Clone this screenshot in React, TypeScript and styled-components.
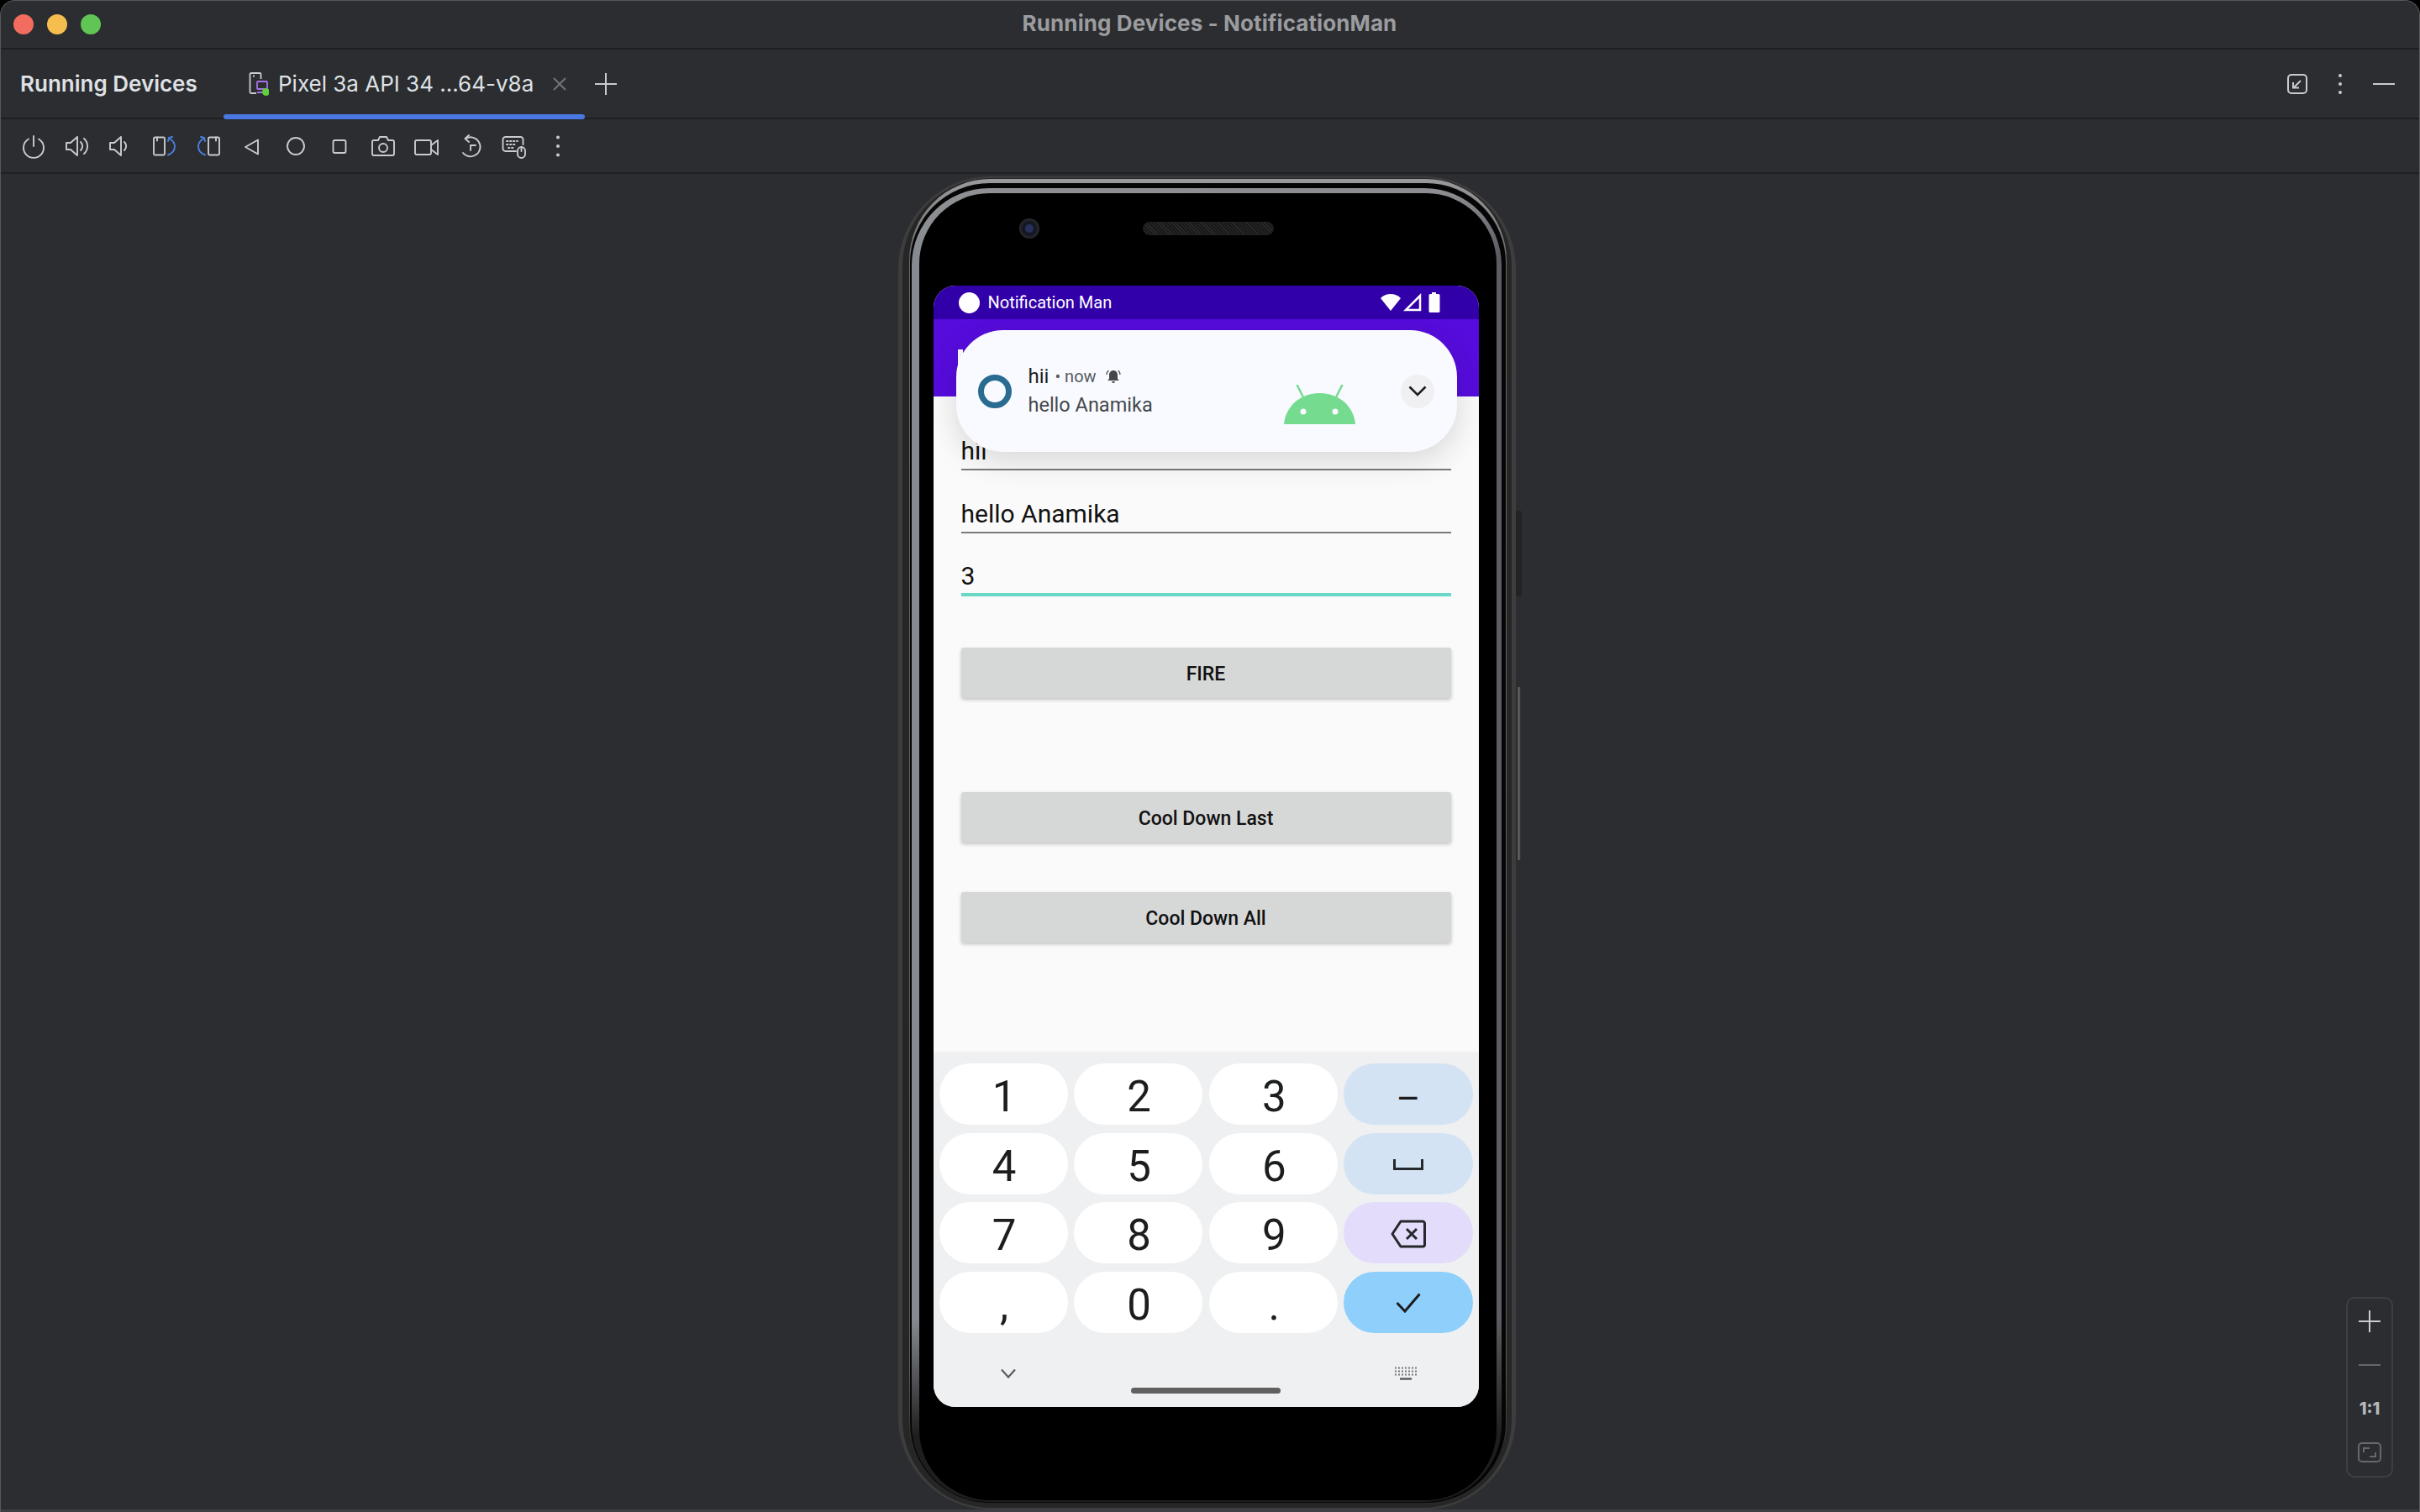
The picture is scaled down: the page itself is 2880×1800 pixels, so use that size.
import React from "react";
import styled, { createGlobalStyle } from "styled-components";

const GlobalStyle = createGlobalStyle`
	html, body {
		margin: 0;
		padding: 0;
		background: #000000;
	}
	* {
		box-sizing: border-box;
	}
`;

const Window = styled.div`
	width: 2880px;
	height: 1800px;
	display: flex;
	flex-direction: column;
	background: #2b2d30;
	border: 1px solid #55575b;
	border-bottom: none;
	border-radius: 18px 18px 0 0;
	overflow: hidden;
	font-family: "Inter", "Liberation Sans", sans-serif;
	color: #dfe1e5;
`;

const TitleBar = styled.div`
	height: 58px;
	flex: none;
	display: grid;
	grid-template-columns: 1fr auto 1fr;
	align-items: center;
	padding: 0 16px 0 15px;
	border-bottom: 2px solid #1e1f22;
`;

const Lights = styled.div`
	display: flex;
	gap: 16px;
`;

const Light = styled.span<{ $color: string }>`
	width: 24px;
	height: 24px;
	border-radius: 50%;
	background: ${({ $color }) => $color};
`;

const WindowTitle = styled.div`
	margin-top: -4px;
	font-size: 26px;
	font-weight: 700;
	letter-spacing: 0.1px;
	color: #9b9c9f;
	white-space: nowrap;
`;

const TabRow = styled.div`
	height: 83px;
	flex: none;
	display: flex;
	align-items: center;
	padding: 0 29px 0 23px;
	border-bottom: 2px solid #1e1f22;
`;

const PanelName = styled.div`
	width: 242px;
	font-size: 26px;
	font-weight: 600;
	color: #dfe1e5;
	white-space: nowrap;
`;

const Tab = styled.div`
	position: relative;
	width: 430px;
	height: 100%;
	display: flex;
	align-items: center;
	padding-left: 30px;
`;

const TabText = styled.span`
	width: 327px;
	margin-left: 11px;
	font-size: 26px;
	color: #dfe1e5;
	white-space: nowrap;
`;

const TabUnderline = styled.div`
	position: absolute;
	left: 0;
	right: 0;
	bottom: -2px;
	height: 6px;
	border-radius: 3px;
	background: #4a78e3;
`;

const TabActions = styled.div`
	margin-left: auto;
	display: flex;
	align-items: center;
	gap: 37px;
`;

const Toolbar = styled.div`
	height: 65px;
	flex: none;
	display: flex;
	align-items: center;
	padding-left: 13px;
	border-bottom: 2px solid #1e1f22;
`;

const ToolSlot = styled.div`
	width: 52px;
	height: 32px;
	display: flex;
	justify-content: center;
`;

const Canvas = styled.main`
	position: relative;
	flex: 1;
	min-height: 0;
	display: flex;
	justify-content: center;
	padding: 3px 8px 0 0;
`;

const BottomStrip = styled.div`
	height: 3px;
	flex: none;
	background: #3e4044;
`;

const ZoomPanel = styled.div`
	position: absolute;
	right: 31px;
	bottom: 38px;
	width: 56px;
	height: 215px;
	padding-top: 1px;
	display: flex;
	flex-direction: column;
	border: 2px solid #3d3f42;
	border-radius: 10px;
`;

const ZoomItem = styled.div`
	height: 52px;
	flex: none;
	display: flex;
	align-items: center;
	justify-content: center;
	font-size: 20px;
	font-weight: 800;
	color: #b6b8ba;
`;

/* device frame, one nested rim per visible band of the skin */
const PhoneShell = styled.div`
	position: relative;
	width: 735px;
	height: 1587px;
	flex: none;
	padding: 2px 5px 2px 5px;
	border-radius: 110px;
	background: #3d3d3e;
`;

const SideKey = styled.div<{ $top: number; $height: number; $shine?: boolean }>`
	position: absolute;
	right: -7px;
	top: ${({ $top }) => $top}px;
	width: 7px;
	height: ${({ $height }) => $height}px;
	border-radius: 0 3px 3px 0;
	background: ${({ $shine }) =>
		$shine ? "linear-gradient(to right, #2a2a2a 20%, #6a6a6a 50%, #2a2a2a 85%)" : "#232323"};
`;

const RimDark = styled.div`
	height: 100%;
	padding: 1px 6px 5px 8px;
	border-radius: 105px;
	background: #262626;
`;

const RimLine = styled.div`
	height: 100%;
	padding: 5px 1px 1px 1px;
	border-radius: 97px;
	background: linear-gradient(to bottom, #9a9a9c 0, #6a6a6c 6%, #5c5c5e 90%, #262626 97%);
`;

const RimGap = styled.div`
	height: 100%;
	padding: 6px 5px 1px 2px;
	border-radius: 95px;
	background: #050505;
`;

const RimBezel = styled.div`
	height: 100%;
	padding: 6px 6px 2px 9px;
	border-radius: 92px;
	background:
		linear-gradient(to bottom, #8f9094 0, transparent 5%, transparent 86%, #1e1e1e 95%),
		linear-gradient(to right, #878b91 45%, #5c5c62 55%);
`;

const Glass = styled.div`
	height: 100%;
	padding: 0 21px 0 17px;
	border-radius: 84px;
	background: #000000;
`;

const BezelTop = styled.div`
	height: 110px;
	padding: 0 0 26px 102px;
	display: flex;
	align-items: center;
	gap: 123px;
`;

const Camera = styled.div`
	width: 24px;
	height: 24px;
	border-radius: 50%;
	background: radial-gradient(circle, #27325c 0 22%, #10131f 38%, #2b2b2d 70%, #1c1c1d 100%);
`;

const Speaker = styled.div`
	width: 156px;
	height: 16px;
	border-radius: 8px;
	border: 1px solid #202020;
	background: repeating-linear-gradient(45deg, #2b2b2b 0 1px, #191919 1px 3px);
`;

const Screen = styled.div`
	position: relative;
	width: 649px;
	height: 1335px;
	display: flex;
	flex-direction: column;
	border-radius: 26px;
	overflow: hidden;
	background: #fafafa;
	font-family: "Roboto", "Liberation Sans", sans-serif;
`;

const StatusBar = styled.div`
	height: 40px;
	flex: none;
	display: flex;
	align-items: center;
	padding: 0 0 0 30px;
	background: #3200a9;
	color: #ffffff;
	font-size: 20px;
`;

const StatusDot = styled.span`
	width: 25px;
	height: 25px;
	margin-right: 10px;
	border-radius: 50%;
	background: #ffffff;
`;

const StatusIcons = styled.div`
	margin-left: auto;
	margin-right: 45px;
	display: flex;
	align-items: center;
	gap: 2px;
`;

const AppBar = styled.div`
	height: 92px;
	flex: none;
	display: flex;
	align-items: center;
	padding-left: 29px;
	background: #560cdc;
`;

/* the only part of the app title that shows past the heads-up card */
const TitleSliver = styled.span`
	width: 6px;
	height: 20px;
	background: #ffffff;
`;

const Notification = styled.div`
	position: absolute;
	top: 53px;
	left: 27px;
	width: 596px;
	height: 145px;
	display: flex;
	align-items: center;
	padding: 0 27px 0 26px;
	border-radius: 56px;
	background: #f8faff;
	box-shadow: 0 10px 36px rgba(0, 0, 0, 0.14);
`;

const NoticeRing = styled.div`
	width: 40px;
	height: 40px;
	flex: none;
	margin-right: 20px;
	border: 7px solid #2a6b92;
	border-radius: 50%;
`;

const NoticeText = styled.div`
	flex: 1;
	display: flex;
	flex-direction: column;
	gap: 5px;
`;

const NoticeHead = styled.div`
	height: 30px;
	display: flex;
	align-items: center;
	font-size: 24px;
	color: #1d1d20;
`;

const NoticeMeta = styled.span`
	margin: 0 11px 0 7px;
	font-size: 20px;
	color: #57595c;
`;

const NoticeBody = styled.div`
	height: 30px;
	line-height: 29px;
	font-size: 23.5px;
	color: #45474a;
`;

const AndroidMark = styled.svg`
	width: 85px;
	height: 47px;
	flex: none;
	margin: 32px 54px 0 0;
`;

const ExpandButton = styled.div`
	width: 40px;
	height: 40px;
	flex: none;
	display: flex;
	align-items: center;
	justify-content: center;
	border-radius: 50%;
	background: #f0f0f2;
`;

const Content = styled.div`
	flex: 1;
	min-height: 0;
	padding: 13px 33px 0;
	display: flex;
	flex-direction: column;
`;

const Field = styled.div<{ $active?: boolean }>`
	height: 75px;
	flex: none;
	display: flex;
	align-items: flex-end;
	padding-bottom: ${({ $active }) => ($active ? "2px" : "3px")};
	border-bottom: ${({ $active }) => ($active ? "4px solid #69d8c6" : "2px solid #7a7a7a")};
	font-size: 30px;
	line-height: 37px;
	color: #111111;
`;

const ActionButton = styled.div<{ $top: number }>`
	height: 60px;
	flex: none;
	margin-top: ${({ $top }) => $top}px;
	padding-top: 2px;
	display: flex;
	align-items: center;
	justify-content: center;
	border-radius: 3px;
	background: #d6d7d7;
	box-shadow: 0 2px 4px rgba(0, 0, 0, 0.22);
	font-size: 23px;
	font-weight: 500;
	color: #111111;
`;

const Keyboard = styled.div`
	height: 423px;
	flex: none;
	padding: 14px 7px 0;
	display: flex;
	flex-direction: column;
	background: #eff0f2;
`;

const KeyGrid = styled.div`
	display: grid;
	grid-template-columns: repeat(4, 1fr);
	grid-auto-rows: 73px;
	gap: 9.5px 7.5px;
`;

const Key = styled.div<{ $bg?: string; $size?: number; $drop?: number }>`
	display: flex;
	align-items: center;
	justify-content: center;
	padding-top: ${({ $drop }) => $drop ?? 6}px;
	padding-left: ${({ $drop }) => ($drop === undefined ? "2px" : "0")};
	border-radius: 37px;
	background: ${({ $bg }) => $bg || "#ffffff"};
	font-size: ${({ $size }) => $size ?? 51}px;
	line-height: 1;
	color: #1c1d1f;
`;

const ImeRow = styled.div`
	height: 28px;
	flex: none;
	margin-top: 34px;
	padding: 0 67px 0 73px;
	display: flex;
	align-items: center;
	justify-content: space-between;
`;

const HomePill = styled.div`
	width: 178px;
	height: 7px;
	flex: none;
	margin: 3px auto 0;
	border-radius: 4px;
	background: #606060;
`;

const Tool = ({ children }: { children: React.ReactNode }) => (
	<ToolSlot>
		<svg width="32" height="32" viewBox="0 0 32 32" fill="none" stroke="#c9cbce" strokeWidth="1.9" strokeLinejoin="round" strokeLinecap="round">
			{children}
		</svg>
	</ToolSlot>
);

const RotateGlyph = () => (
	<>
		<rect x="3" y="5.5" width="13" height="21" rx="1.5" />
		<path d="M7 5.5v4" />
		<path d="M21 6.5c4.500 2.500 7 6 7 10s-3 8-8 10" stroke="#4a7fe0" />
		<path d="M20 10l1-4 4-1" stroke="#4a7fe0" />
	</>
);

const toolbarIcons = [
	<>
		<path d="M10 7.5a12 12 0 1 0 12 0" />
		<path d="M16 4v12" />
	</>,
	<>
		<path d="M3 12h5l8-7v22l-8-7H3z" />
		<path d="M20 11a7 7 0 0 1 0 10" />
		<path d="M24 7a12 12 0 0 1 0 18" />
	</>,
	<>
		<path d="M3 12h5l8-7v22l-8-7H3z" />
		<path d="M20 11a7 7 0 0 1 0 10" />
	</>,
	<RotateGlyph />,
	<g transform="matrix(-1 0 0 1 32 0)">
		<RotateGlyph />
	</g>,
	<path d="M8 17l15-8.500v17z" />,
	<circle cx="16" cy="16" r="10" />,
	<rect x="8.500" y="9" width="15" height="15" rx="2" />,
	<>
		<path d="M5 9h5l2-4h8l2 4h5a2 2 0 0 1 2 2v14a2 2 0 0 1-2 2H5a2 2 0 0 1-2-2V11a2 2 0 0 1 2-2z" />
		<circle cx="16" cy="18" r="5" />
	</>,
	<>
		<rect x="2" y="9" width="19" height="17" rx="2" />
		<path d="M21 15l8-6v17l-8-6" />
	</>,
	<>
		<path d="M10 7a11.500 11.500 0 1 1-3 17" />
		<path d="M14 3l-4.500 4 4.500 4" />
		<path d="M16 21v-6h6" />
	</>,
	<>
		<path d="M18 22H5.500a3 3 0 0 1-3-3V8a3 3 0 0 1 3-3h18a3 3 0 0 1 3 3v6" />
		<path d="M7 10h13M7 14h11M9 18h7" strokeDasharray="1.500 2.500" />
		<rect x="20" y="17" width="9" height="13" rx="4.500" />
		<path d="M24.500 17v5" />
	</>,
	<>
		<circle cx="16" cy="5.500" r="2" fill="#c9cbce" stroke="none" />
		<circle cx="16" cy="16" r="2" fill="#c9cbce" stroke="none" />
		<circle cx="16" cy="26.500" r="2" fill="#c9cbce" stroke="none" />
	</>,
];

const DeviceTabIcon = () => (
	<svg width="24" height="30" viewBox="0 0 24 30" fill="none" strokeWidth="1.8">
		<path d="M9 26H3a1.500 1.500 0 0 1-1.500-1.500v-21A1.500 1.500 0 0 1 3 2h10a1.500 1.500 0 0 1 1.500 1.500V9" stroke="#c9cbce" />
		<path d="M5 5.500h2" stroke="#c9cbce" />
		<rect x="10" y="12" width="12" height="9" rx="1" stroke="#a874e8" />
		<path d="M10 25h8" stroke="#a874e8" />
		<circle cx="20.500" cy="24.500" r="4.500" fill="#5fd13c" />
	</svg>
);

const App = () => {
	const digits = ["1", "2", "3", "4", "5", "6", "7", "8", "9"];

	return (
		<>
			<GlobalStyle />
			<Window>
				<TitleBar>
					<Lights>
						<Light $color="#f26d5f" />
						<Light $color="#f6bd4f" />
						<Light $color="#60c554" />
					</Lights>
					<WindowTitle>Running Devices - NotificationMan</WindowTitle>
				</TitleBar>

				<TabRow>
					<PanelName>Running Devices</PanelName>
					<Tab>
						<DeviceTabIcon />
						<TabText>Pixel 3a API 34 ...64-v8a</TabText>
						<svg width="16" height="16" viewBox="0 0 16 16" stroke="#75777b" strokeWidth="1.8">
							<path d="M1 1l14 14M15 1L1 15" />
						</svg>
						<TabUnderline />
					</Tab>
					<svg width="26" height="26" viewBox="0 0 26 26" stroke="#c9cbce" strokeWidth="2" style={{ marginLeft: 12 }}>
						<path d="M13 0v26M0 13h26" />
					</svg>
					<TabActions>
						<svg width="24" height="24" viewBox="0 0 24 24" fill="none" stroke="#c9cbce" strokeWidth="2">
							<rect x="1" y="1" width="22" height="22" rx="4" />
							<path d="M16 8l-8 8M7 10v6.500h7" />
						</svg>
						<svg width="4" height="24" viewBox="0 0 4 24" fill="#c9cbce">
							<circle cx="2" cy="2" r="2" />
							<circle cx="2" cy="12" r="2" />
							<circle cx="2" cy="22" r="2" />
						</svg>
						<svg width="26" height="2" viewBox="0 0 26 2" fill="#c9cbce">
							<rect width="26" height="2" />
						</svg>
					</TabActions>
				</TabRow>

				<Toolbar>
					{toolbarIcons.map((icon, index) => (
						<Tool key={index}>{icon}</Tool>
					))}
				</Toolbar>

				<Canvas>
					<PhoneShell>
						<SideKey $top={398} $height={102} />
						<SideKey $top={608} $height={206} $shine />
						<RimDark>
							<RimLine>
								<RimGap>
									<RimBezel>
										<Glass>
											<BezelTop>
												<Camera />
												<Speaker />
											</BezelTop>
											<Screen>
												<StatusBar>
													<StatusDot />
													Notification Man
													<StatusIcons>
														<svg width="26" height="22" viewBox="0 0 26 22" fill="#ffffff">
															<path d="M1 6C4 2.500 8.500 1 13 1s9 1.500 12 5L13 21z" />
														</svg>
														<svg width="22" height="22" viewBox="0 0 22 22" fill="none" stroke="#ffffff" strokeWidth="2.500">
															<path d="M20 3v17H3z" />
														</svg>
														<svg width="16" height="24" viewBox="0 0 16 24" fill="#ffffff" style={{ marginLeft: 5 }}>
															<path d="M5 0h5v2h3a1.500 1.500 0 0 1 1.500 1.500v19A1.500 1.500 0 0 1 13 24H3a1.500 1.500 0 0 1-1.500-1.500v-19A1.500 1.500 0 0 1 3 2h2z" />
														</svg>
													</StatusIcons>
												</StatusBar>
												<AppBar>
													<TitleSliver />
												</AppBar>

												<Content>
													<Field>hii</Field>
													<Field>hello Anamika</Field>
													<Field $active>3</Field>
													<ActionButton $top={61}>FIRE</ActionButton>
													<ActionButton $top={112}>Cool Down Last</ActionButton>
													<ActionButton $top={59}>Cool Down All</ActionButton>
												</Content>

												<Keyboard>
													<KeyGrid>
														{digits.slice(0, 3).map((d) => (
															<Key key={d}>{d}</Key>
														))}
														<Key $bg="#d4e3f3" $size={44} $drop={10}>–</Key>
														{digits.slice(3, 6).map((d) => (
															<Key key={d}>{d}</Key>
														))}
														<Key $bg="#d4e3f3" $drop={1}>
															<svg width="36" height="14" viewBox="0 0 36 14" fill="none" stroke="#26282b" strokeWidth="3">
																<path d="M1.500 1v11.500h33V1" />
															</svg>
														</Key>
														{digits.slice(6, 9).map((d) => (
															<Key key={d}>{d}</Key>
														))}
														<Key $bg="#e3dcfa" $drop={3}>
															<svg width="42" height="34" viewBox="0 0 42 34" fill="none" stroke="#26282b" strokeWidth="3" strokeLinejoin="round">
																<path d="M12 2h26a2.500 2.500 0 0 1 2.500 2.500v25A2.500 2.500 0 0 1 38 32H12L2 17z" />
																<path d="M19 11l12 12M31 11L19 23" />
															</svg>
														</Key>
														<Key>,</Key>
														<Key>0</Key>
														<Key>.</Key>
														<Key $bg="#8ecffb" $drop={1}>
															<svg width="30" height="24" viewBox="0 0 30 24" fill="none" stroke="#1c1d1f" strokeWidth="3">
																<path d="M1.500 12L11 22 28.500 1.500" />
															</svg>
														</Key>
													</KeyGrid>
													<ImeRow>
														<svg width="18" height="12" viewBox="0 0 18 12" fill="none" stroke="#5c5d60" strokeWidth="2.200">
															<path d="M1 1.500L9 10.500 17 1.500" />
														</svg>
														<svg width="26" height="16" viewBox="0 0 26 16" fill="none">
															<path d="M0 1.500h26M0 5.500h26M0 9.500h26" stroke="#77787b" strokeWidth="2" strokeDasharray="2 2" />
															<path d="M6 14.500h14" stroke="#5c5d60" strokeWidth="2.600" />
														</svg>
													</ImeRow>
													<HomePill />
												</Keyboard>

												<Notification>
													<NoticeRing />
													<NoticeText>
														<NoticeHead>
															hii
															<NoticeMeta>• now</NoticeMeta>
															<svg width="18" height="17" viewBox="0 0 18 17" fill="#44464a">
																<path d="M9 1a5 5 0 0 1 5 5v5l2 2H2l2-2V6a5 5 0 0 1 5-5zM7 14h4a2 2 0 0 1-4 0z" />
																<path d="M1 6c0-2 1-4 2.500-5M17 6c0-2-1-4-2.500-5" fill="none" stroke="#44464a" strokeWidth="1.300" />
															</svg>
														</NoticeHead>
														<NoticeBody>hello Anamika</NoticeBody>
													</NoticeText>
													<AndroidMark viewBox="0 0 85 47">
														<path d="M0 47C2 25 20 10 42.500 10S83 25 85 47z" fill="#75db8f" />
														<path d="M15.500 0l8 16M69.500 0l-8 16" stroke="#75db8f" strokeWidth="2.500" />
														<circle cx="23" cy="32" r="3.500" fill="#f8faff" />
														<circle cx="61" cy="32" r="3.500" fill="#f8faff" />
													</AndroidMark>
													<ExpandButton>
														<svg width="22" height="13" viewBox="0 0 22 13" fill="none" stroke="#1f1f1f" strokeWidth="2.600">
															<path d="M1.500 1.500L11 11 20.500 1.500" />
														</svg>
													</ExpandButton>
												</Notification>
											</Screen>
										</Glass>
									</RimBezel>
								</RimGap>
							</RimLine>
						</RimDark>
					</PhoneShell>

					<ZoomPanel>
						<ZoomItem>
							<svg width="26" height="26" viewBox="0 0 26 26" stroke="#c9cbce" strokeWidth="2">
								<path d="M13 0v26M0 13h26" />
							</svg>
						</ZoomItem>
						<ZoomItem>
							<svg width="26" height="2" viewBox="0 0 26 2" fill="#66686b">
								<rect width="26" height="2" />
							</svg>
						</ZoomItem>
						<ZoomItem>1:1</ZoomItem>
						<ZoomItem>
							<svg width="28" height="24" viewBox="0 0 28 24" fill="none" stroke="#66686b" strokeWidth="2">
								<rect x="1" y="1" width="26" height="22" rx="4" />
								<path d="M7 12V7h7M21 12v5h-7" />
							</svg>
						</ZoomItem>
					</ZoomPanel>
				</Canvas>
				<BottomStrip />
			</Window>
		</>
	);
};

export default App;
